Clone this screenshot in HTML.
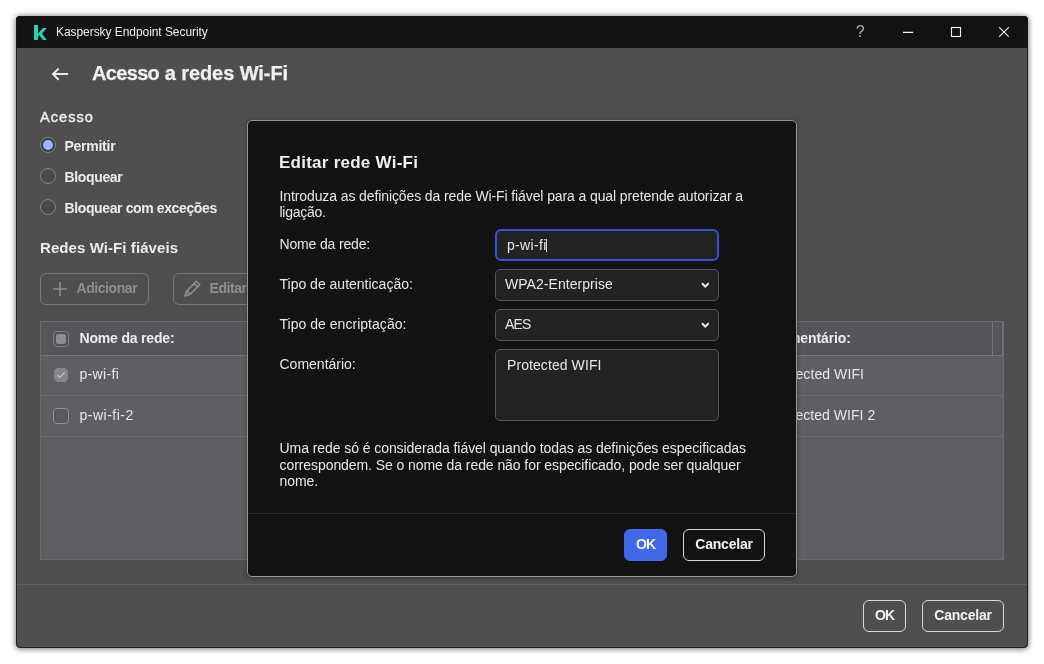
<!DOCTYPE html>
<html lang="pt">
<head>
<meta charset="utf-8">
<title>Kaspersky Endpoint Security</title>
<style>
*{box-sizing:border-box;margin:0;padding:0}
html,body{width:1044px;height:664px;overflow:hidden;background:#fff}
body{font-family:"Liberation Sans",sans-serif;color:#e6e6e6;font-size:14px;position:relative}
.abs{position:absolute;white-space:nowrap}
#win{will-change:transform;position:absolute;left:16px;top:16px;width:1012px;height:632px;background:#4f4f4f;border-radius:4px;overflow:hidden;
 box-shadow:0 0 6px rgba(0,0,0,.5),0 2px 6px rgba(0,0,0,.18)}
#win::after{content:"";position:absolute;left:0;top:0;right:0;bottom:0;border:1px solid rgba(24,24,30,.85);border-radius:4px;pointer-events:none;z-index:50}
#tbar{position:absolute;left:0;top:0;width:100%;height:32px;background:#131313}
#tbar .ttl{left:40px;top:9px;font-size:12px;line-height:14px;color:#ededed;letter-spacing:-0.06px}
.h1{left:76px;top:45px;font-size:20px;font-weight:bold;line-height:24px;color:#f0f0f0;letter-spacing:-0.07px;-webkit-text-stroke:.25px #f0f0f0}
.h2{font-size:15px;font-weight:bold;line-height:18px;color:#ececec;letter-spacing:.08px}
.b{font-size:14px;font-weight:bold;line-height:16px;color:#ececec}
.r{font-size:14px;line-height:16px;color:#e6e6e6}
.radio{position:absolute;width:16px;height:16px;border-radius:50%;border:1px solid #868686;background:#4a4a4a}
.radio.on{border-color:#868686;background:#3a3a3a}
.radio.on::after{content:"";position:absolute;left:2px;top:2px;width:10px;height:10px;border-radius:50%;background:#9db6ff}
.btn{position:absolute;height:32px;border:1px solid #d8d8d8;border-radius:6px;font-size:14px;font-weight:bold;line-height:28px;text-align:center;color:#f2f2f2;white-space:nowrap}
.btn.dis{border-color:#7a7a7a;color:#8e8e8e;text-align:left}
#tbl{position:absolute;left:24px;top:305px;width:964px;height:239px;background:#5e5e63;border:1px solid #6b6b6f}
#tbl .hd{position:absolute;left:0;top:0;width:100%;height:34px;background:#55555a;border-bottom:1px solid #77777b}
#tbl .row{position:absolute;left:0;width:100%;border-bottom:1px solid #6e6e72}
.cb{position:absolute;width:16px;height:16px;border:1px solid #8f8f92;border-radius:4px;background:#595959}
#footline{position:absolute;left:0;top:568px;width:100%;height:1px;background:#606060}
#dlg{position:absolute;left:231px;top:104px;width:550px;height:457px;background:#131313;border:1px solid #969696;border-radius:5px;overflow:hidden;box-shadow:0 1px 5px rgba(0,0,0,.3)}
#dlg .t{left:31px;top:31.500px;font-size:17px;font-weight:bold;line-height:20px;color:#efefef;letter-spacing:.25px}
.fld{position:absolute;left:247px;width:224px;height:32px;border:1px solid #555;border-radius:5px;background:#232323;font-size:14px;line-height:30px;color:#e6e6e6;white-space:nowrap}
#dlg .sep{position:absolute;left:0;top:392px;width:100%;height:1px;background:#262626}
</style>
</head>
<body>
<div id="win">
  <div id="tbar">
    <svg class="abs" style="left:18.200px;top:8.700px" width="14" height="16" viewBox="0 0 14 16"><path transform="scale(.96,.94)" d="M0 0H4.200V9L9.400 3.300H13.200L8.300 9.200L13.300 16H9.200L5.500 10.900L4.200 12.200V16H0Z" fill="#25d4ac"/></svg>
    <div class="abs ttl">Kaspersky Endpoint Security</div>
    <div class="abs" style="left:839.800px;top:6.600px;font-size:16px;line-height:18px;color:#a9a9a9">?</div>
    <svg class="abs" style="left:880px;top:8px" width="24" height="16" viewBox="0 0 24 16"><path d="M7 8.450h10.200" stroke="#f2f2f2" stroke-width="1.300"/></svg>
    <svg class="abs" style="left:928px;top:8px" width="24" height="16" viewBox="0 0 24 16"><rect x="7.500" y="3.500" width="9" height="9" fill="none" stroke="#f2f2f2" stroke-width="1.100"/></svg>
    <svg class="abs" style="left:976px;top:8px" width="24" height="16" viewBox="0 0 24 16"><path d="M7.300 3.300l9.400 9.400M16.700 3.300l-9.400 9.400" stroke="#f2f2f2" stroke-width="1.150"/></svg>
  </div>

  <svg class="abs" style="left:35px;top:51px" width="18" height="14" viewBox="0 0 18 14"><path d="M17.100 7.100H2M7.600 1.600L2 7.100l5.600 5.600" fill="none" stroke="#ececec" stroke-width="2"/></svg>
  <div class="abs h1"><span style="letter-spacing:-.67px">Acesso</span> a redes Wi-Fi</div>

  <div class="abs" style="left:24px;top:92px;font-size:14.500px;line-height:18px;color:#ececec;letter-spacing:1.05px;-webkit-text-stroke:.45px #ececec">Acesso</div>
  <div class="radio on" style="left:24px;top:121px"></div><div class="abs b" style="left:48.500px;top:122px;letter-spacing:-.26px">Permitir</div>
  <div class="radio" style="left:24px;top:152px"></div><div class="abs b" style="left:48.500px;top:153px;letter-spacing:-.35px">Bloquear</div>
  <div class="radio" style="left:24px;top:183px"></div><div class="abs b" style="left:48.500px;top:184px;letter-spacing:-.38px">Bloquear com exceções</div>

  <div class="abs h2" style="left:24px;top:223px">Redes Wi-Fi fiáveis</div>
  <div class="btn dis" style="left:24px;top:257px;width:109px;padding-left:35.500px;letter-spacing:-.43px">Adicionar
    <svg class="abs" style="left:12px;top:8px" width="14" height="14" viewBox="0 0 14 14"><path d="M7 0v14M0 7h14" stroke="#8e8e8e" stroke-width="1.600"/></svg>
  </div>
  <div class="btn dis" style="left:157px;top:257px;width:100px;padding-left:35.500px;letter-spacing:-.43px">Editar
    <svg class="abs" style="left:10.300px;top:5.800px" width="18" height="18" viewBox="0 0 18 18"><path d="M1.100 15.900L2.850 10.850L12.350 1.350L15.750 4.750L6.250 14.250ZM2.850 10.850L6.250 14.250M10.150 3.550L13.550 6.950" fill="none" stroke="#8c8c8c" stroke-width="1.700" stroke-linejoin="round" stroke-linecap="round"/></svg>
  </div>

  <div id="tbl">
    <div class="hd">
      <div class="cb" style="left:12px;top:9px;border-color:#828285;background:#505053"><div style="position:absolute;left:2px;top:2px;width:10px;height:10px;border-radius:2px;background:#8e8e90"></div></div>
      <div class="abs b" style="left:38.500px;top:8px;letter-spacing:-.18px">Nome da rede:</div>
      <div class="abs b" style="left:728.500px;top:8px;letter-spacing:-.11px">Comentário:</div>
      <div style="position:absolute;left:951px;top:0;width:1px;height:34px;background:#79797d"></div>
      <div style="position:absolute;left:961px;top:0;width:1px;height:34px;background:#747478"></div>
    </div>
    <div class="row" style="top:34px;height:40px">
      <div class="cb" style="left:13px;top:12px;width:14px;height:14px;background:#868689;border-color:#868689"><svg style="position:absolute;left:1px;top:1px" width="10" height="10" viewBox="0 0 10 10"><path d="M1.500 5.200l2.300 2.300 4.700-5" fill="none" stroke="#bcbcbe" stroke-width="1.400"/></svg></div>
      <div class="abs r" style="left:38.500px;top:10px;letter-spacing:.32px">p-wi-fi</div>
      <div class="abs r" style="left:728.500px;top:10px;letter-spacing:.08px">Protected WIFI</div>
    </div>
    <div class="row" style="top:74px;height:41px">
      <div class="cb" style="left:12px;top:12px"></div>
      <div class="abs r" style="left:38.500px;top:11px;letter-spacing:.5px">p-wi-fi-2</div>
      <div class="abs r" style="left:728.500px;top:11px;letter-spacing:.05px">Protected WIFI 2</div>
    </div>
  </div>

  <div id="footline"></div>
  <div class="btn" style="left:847px;top:584px;width:43px;letter-spacing:-1px">OK</div>
  <div class="btn" style="left:906px;top:584px;width:82px;letter-spacing:-.2px">Cancelar</div>

  <div id="dlg">
    <div class="abs t">Editar rede Wi-Fi</div>
    <div class="abs r" style="left:31.500px;top:67px;letter-spacing:-.105px">Introduza as definições da rede Wi-Fi fiável para a qual pretende autorizar a</div>
    <div class="abs r" style="left:31.500px;top:83px;letter-spacing:-.28px">ligação.</div>
    <div class="abs r" style="left:31.500px;top:115px;letter-spacing:-.16px">Nome da rede:</div>
    <div class="fld" style="top:108px;border:2px solid #3b51cf;border-radius:6px;padding-left:10px;line-height:28px;letter-spacing:.32px">p-wi-fi<span style="display:inline-block;width:1px;height:13px;background:#d8d8d8;vertical-align:-2px;margin-left:-.5px"></span></div>
    <div class="abs r" style="left:31.500px;top:155px">Tipo de autenticação:</div>
    <div class="fld" style="top:148px;padding-left:9px;letter-spacing:.05px;line-height:29px">WPA2-Enterprise
      <svg class="abs" style="left:205px;top:12px" width="9" height="7" viewBox="0 0 9 7"><path d="M1 1.200l3.300 3.400L7.600 1.200" fill="none" stroke="#f0f0f0" stroke-width="2"/></svg>
    </div>
    <div class="abs r" style="left:31.500px;top:195px;letter-spacing:.03px">Tipo de encriptação:</div>
    <div class="fld" style="top:188px;padding-left:9px;letter-spacing:-.8px;line-height:29px">AES
      <svg class="abs" style="left:205px;top:12px" width="9" height="7" viewBox="0 0 9 7"><path d="M1 1.200l3.300 3.400L7.600 1.200" fill="none" stroke="#f0f0f0" stroke-width="2"/></svg>
    </div>
    <div class="abs r" style="left:31.500px;top:235px">Comentário:</div>
    <div class="fld" style="top:228px;height:72px;padding-left:11px;letter-spacing:.08px">Protected WIFI</div>
    <div class="abs r" style="left:31.500px;top:319px;letter-spacing:-.07px">Uma rede só é considerada fiável quando todas as definições especificadas</div>
    <div class="abs r" style="left:31.500px;top:336px;letter-spacing:-.073px">correspondem. Se o nome da rede não for especificado, pode ser qualquer</div>
    <div class="abs r" style="left:31.500px;top:352px;letter-spacing:-.09px">nome.</div>
    <div class="sep"></div>
    <div class="btn" style="left:376px;top:408px;width:43px;background:#4068e8;border-color:#4068e8;letter-spacing:-1px">OK</div>
    <div class="btn" style="left:435px;top:408px;width:82px;letter-spacing:-.2px">Cancelar</div>
  </div>
</div>
</body>
</html>
